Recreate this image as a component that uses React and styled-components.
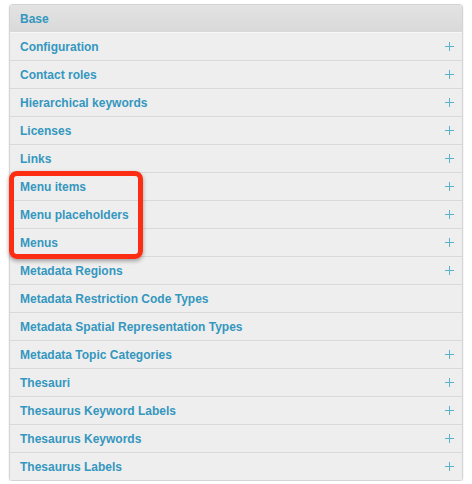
import React from "react";
import styled, { createGlobalStyle } from "styled-components";

const Global = createGlobalStyle`
  body {
    margin: 0;
    background: #fff;
    font-family: "Liberation Sans", Arial, sans-serif;
  }
`;

const Page = styled.div`
  position: relative;
  padding: 4px 9px 0 9px;
  width: 454px;
`;

const Module = styled.div`
  border: 1px solid #d4d4d4;
  border-radius: 3px;
  box-shadow: 0 1px 2px rgba(0, 0, 0, 0.12);
  overflow: hidden;
`;

const Caption = styled.div`
  height: 27px;
  display: flex;
  align-items: center;
  padding: 0 10px;
  background: linear-gradient(#e3e3e3, #d9d9d9);
  border-bottom: 1px solid #f7f7f7;
  font-size: 12px;
  font-weight: bold;
  color: #3497bf;
`;

const Row = styled.div`
  height: 27px;
  display: flex;
  align-items: center;
  justify-content: space-between;
  padding: 0 8px 0 10px;
  background: #eeeeee;
  border-bottom: 1px solid #d9d9d9;
  &:last-of-type {
    border-bottom: none;
  }
`;

const Label = styled.a`
  font-size: 12px;
  font-weight: bold;
  color: #3497bf;
  text-decoration: none;
`;

const Plus = styled.span`
  width: 9px;
  height: 9px;
  position: relative;
  &::before,
  &::after {
    content: "";
    position: absolute;
    background: #5ab3cf;
  }
  &::before {
    left: 4px;
    top: 0;
    width: 1px;
    height: 9px;
  }
  &::after {
    top: 4px;
    left: 0;
    width: 9px;
    height: 1px;
  }
`;

const Highlight = styled.div`
  position: absolute;
  left: 9px;
  top: 171px;
  width: 124px;
  height: 78px;
  border: 5px solid #fc2d12;
  border-radius: 8px;
  box-shadow: 0 2px 4px rgba(0, 0, 0, 0.35);
  pointer-events: none;
`;

const items = [
  ["Configuration", true],
  ["Contact roles", true],
  ["Hierarchical keywords", true],
  ["Licenses", true],
  ["Links", true],
  ["Menu items", true],
  ["Menu placeholders", true],
  ["Menus", true],
  ["Metadata Regions", true],
  ["Metadata Restriction Code Types", false],
  ["Metadata Spatial Representation Types", false],
  ["Metadata Topic Categories", true],
  ["Thesauri", true],
  ["Thesaurus Keyword Labels", true],
  ["Thesaurus Keywords", true],
  ["Thesaurus Labels", true],
];

export default function App() {
  return (
    <Page>
      <Global />
      <Module>
        <Caption>Base</Caption>
        <div>
          {items.map(([name, add]) => (
            <Row key={name}>
              <Label href="#">{name}</Label>
              {add && <Plus />}
            </Row>
          ))}
        </div>
      </Module>
      <Highlight />
    </Page>
  );
}
